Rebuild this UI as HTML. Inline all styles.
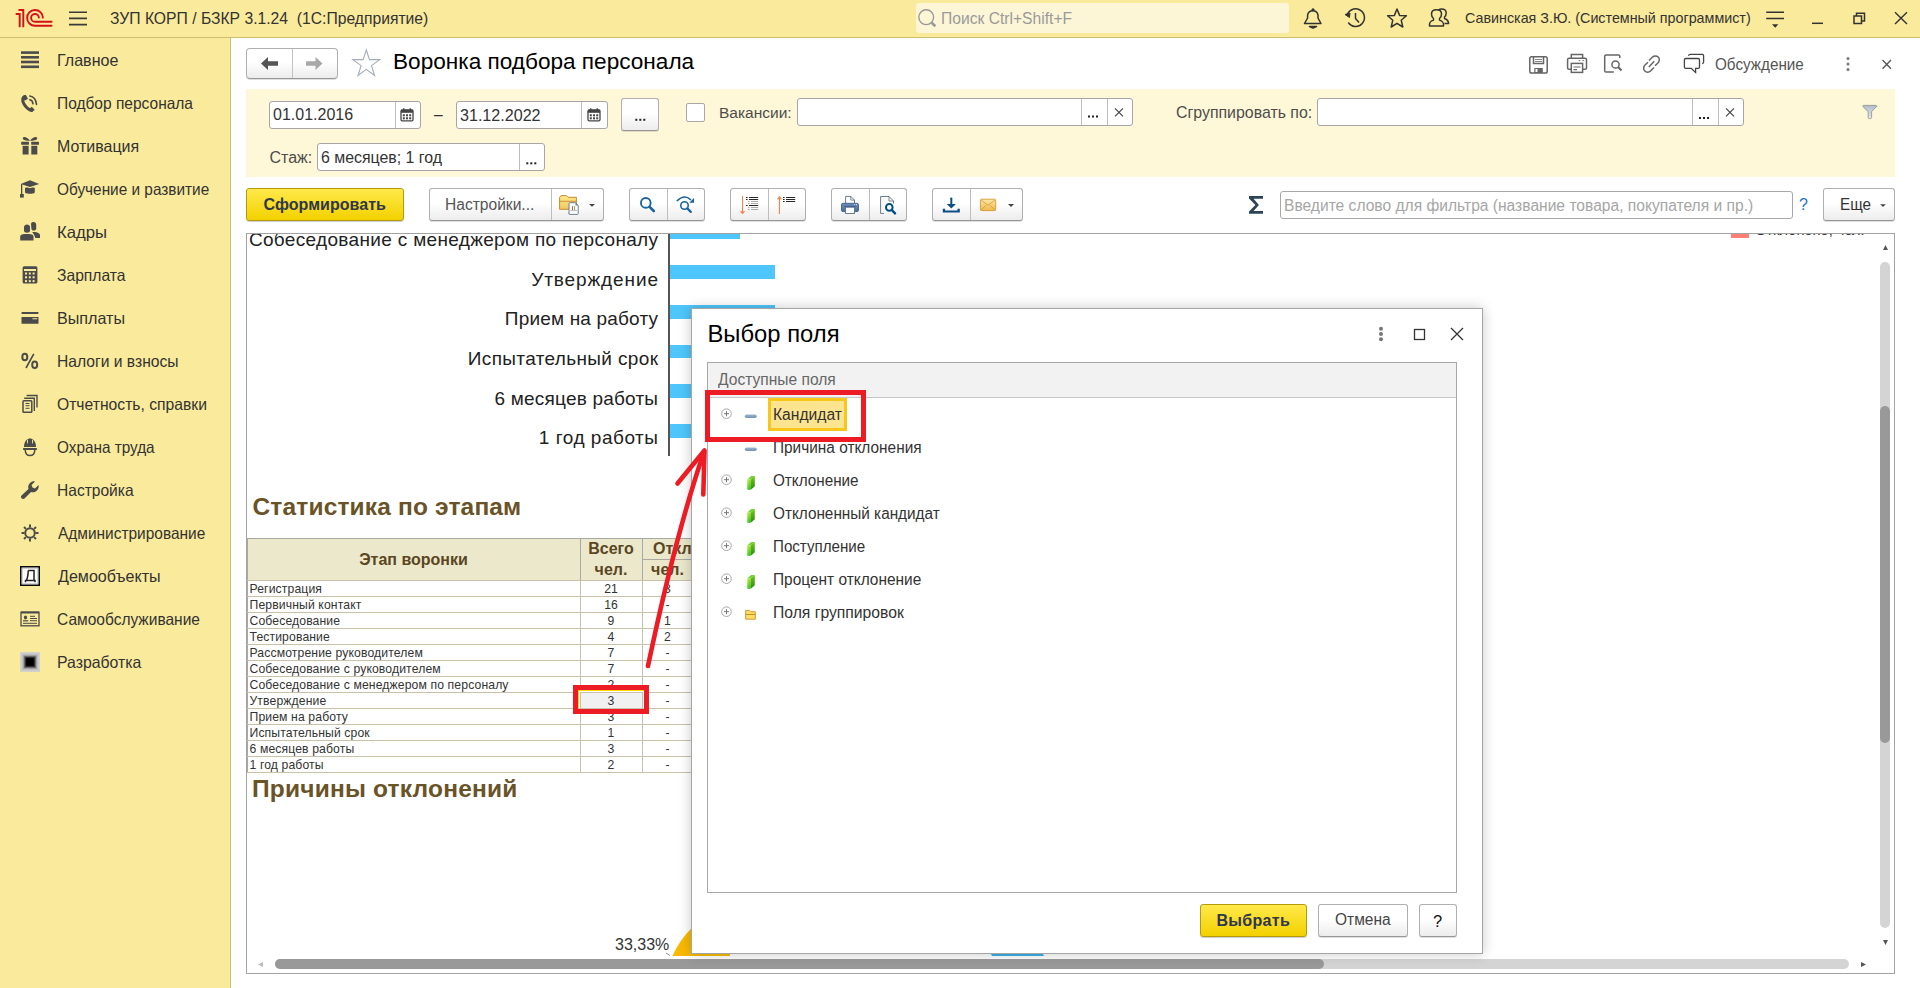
<!DOCTYPE html>
<html><head><meta charset="utf-8">
<style>
*{margin:0;padding:0;box-sizing:border-box}
html,body{width:1920px;height:988px;overflow:hidden;background:#fff;font-family:"Liberation Sans",sans-serif;color:#333}
.a{position:absolute}
.t{position:absolute;white-space:pre;line-height:1}
svg{position:absolute;overflow:visible}
#top{left:0;top:0;width:1920px;height:38px;background:#FAEA9B;border-bottom:1px solid #CDBE70}
#side{left:0;top:38px;width:231px;height:950px;background:#FAEA9B;border-right:1px solid #CDBE70}
.si{font-size:16.5px;color:#333;transform-origin:0 0}
.btn{position:absolute;border:1px solid #B0B0B0;border-bottom-color:#979797;border-radius:3px;background:linear-gradient(#FFFFFF 45%,#ECECEC);box-shadow:0 1px 0.5px rgba(0,0,0,.12)}
.inp{position:absolute;border:1px solid #A6A6A6;border-radius:3px;background:#fff}
.dv{position:absolute;top:0;bottom:0;width:1px;background:#BDBDBD}
.ybtn{position:absolute;border:1px solid #B39B0A;border-radius:3px;background:linear-gradient(#FFE94A,#F2D100);box-shadow:0 1px 1px rgba(0,0,0,.2)}
</style></head><body>

<!-- TOP BAR -->
<div id="top" class="a"></div>
<svg style="left:0;top:0" width="60" height="37" viewBox="0 0 60 37">
  <g fill="none" stroke="#D50F1A" stroke-width="1.9" stroke-linecap="round" stroke-linejoin="miter">
    <path d="M16.4 14 H19.7 V26.4"/>
    <path d="M19.2 10 H23.3 V26.4"/>
    <path d="M42.9 17.6 A7.9 7.9 0 1 0 35 25.8 H51.6"/>
    <path d="M38.9 17.6 A3.9 3.9 0 1 0 35 21.8 H51.6"/>
  </g>
</svg>
<svg style="left:0;top:0" width="100" height="37">
  <g stroke="#3a3a3a" stroke-width="1.6"><path d="M69 12.2H87M69 18.4H87M69 24.6H87"/></g>
</svg>
<div class="t" style="left:110px;top:11px;font-size:15.7px;color:#333">ЗУП КОРП / БЗКР 3.1.24  (1С:Предприятие)</div>

<div class="a" style="left:916px;top:3px;width:373px;height:30px;background:#FDF6D6;border-radius:3px"></div>
<svg style="left:0;top:0" width="1" height="1">
  <g fill="none" stroke="#999" stroke-width="1.4"><circle cx="926.2" cy="17.2" r="7.4"/><path d="M931.6 22.6 L935.3 26.3" stroke-width="2.7"/></g>
</svg>
<div class="t" style="left:941px;top:11px;font-size:16px;color:#9A9A9A;transform-origin:0 0;transform:scaleX(0.977)">Поиск Ctrl+Shift+F</div>

<!-- top right icons -->
<svg style="left:0;top:0" width="1" height="1">
  <g fill="none" stroke="#333" stroke-width="1.5" stroke-linejoin="round">
    <!-- bell -->
    <path d="M1304.5 23.5 H1321 L1318 18 V15 A5.3 5.3 0 0 0 1307.6 15 V18 Z"/>
    <path d="M1309.5 26.5 H1316.5 L1313 28 Z" fill="#333"/>
    <circle cx="1313" cy="9.8" r="0.8" fill="#333"/>
    <!-- history -->
    <path d="M1347 16 A8.8 8.8 0 1 1 1348.3 22.5"/>
    <path d="M1345 14.5 L1349.5 17.5 L1350 13 Z" fill="#333" stroke-width="1"/>
    <path d="M1355.5 13 V18.5 L1359 22.5"/>
    <!-- star -->
    <path d="M1397 9 L1399.6 15.4 L1406.4 15.8 L1401.2 20.2 L1402.8 27 L1397 23.3 L1391.2 27 L1392.8 20.2 L1387.6 15.8 L1394.4 15.4 Z"/>
    <!-- users -->
    <path d="M1429.5 26 H1443.5 C1444 22 1442 21 1439.5 20 V18.5 C1441 17.5 1441.5 15.5 1441.5 14 C1441.5 11.5 1439.5 9.8 1436.5 9.8 C1433.5 9.8 1431.5 11.5 1431.5 14 C1431.5 15.5 1432 17.5 1433.5 18.5 V20 C1431 21 1429 22 1429.5 26 Z"/>
    <path d="M1438.5 10 C1439.5 9.2 1440.5 9 1441.5 9 C1444.5 9 1446.2 10.8 1446.2 13 C1446.2 14.5 1445.8 16 1444.5 17 V18.5 C1447 19.5 1448.6 20.5 1448.6 23.5 H1444.5"/>
  </g>
</svg>
<div class="t" style="left:1465px;top:11px;font-size:14.3px;color:#333">Савинская З.Ю. (Системный программист)</div>
<svg style="left:0;top:0" width="1" height="1">
  <g fill="none" stroke="#333" stroke-width="1.5">
    <path d="M1766.2 12.2 H1784 M1766.2 18.5 H1784"/>
    <path d="M1772 24.2 H1778.4 L1775.2 27.8 Z" fill="#333" stroke="none"/>
    <path d="M1812 23.3 H1823"/>
    <path d="M1854 16 H1861.5 V23.5 H1854 Z M1856.5 16 V13.2 H1864.5 V21 H1861.5"/>
    <path d="M1895 12.2 L1907 24 M1907 12.2 L1895 24" stroke-width="1.4"/>
  </g>
</svg>

<!-- SIDEBAR -->
<div id="side" class="a"></div>
<div id="sideitems">
<svg style="left:15px;top:45px" width="30" height="30" viewBox="0 0 30 30"><g fill="#4B4B4B"><rect x="6" y="6.3" width="18" height="2.6"/><rect x="6" y="11" width="18" height="2.6"/><rect x="6" y="15.7" width="18" height="2.6"/><rect x="6" y="20.5" width="18" height="2.6"/></g></svg>
<div class="t si" style="left:56.6px;top:52px;transform:scaleX(0.974)">Главное</div>
<svg style="left:15px;top:88px" width="30" height="30" viewBox="0 0 30 30"><g fill="none" stroke="#4B4B4B" stroke-linecap="round"><path d="M9.5 8.5 C7.5 10 7 12.5 9 16 C11 19.5 13 21.5 16.5 22.5" stroke-width="3"/><path d="M8.5 9 L10.5 7.8 L12 10.5 L10 11.8Z" fill="#4B4B4B" stroke-width="1.5"/><path d="M15 21.2 L16.8 19.8 L18.6 21.8 L17 23Z" fill="#4B4B4B" stroke-width="1.5"/><path d="M14.8 8 C18.5 8.5 21 11.5 21.5 16.5" stroke-width="1.6"/><path d="M14.8 11.8 C16.8 12.3 17.8 13.8 18 15.8" stroke-width="1.6"/></g></svg>
<div class="t si" style="left:56.7px;top:95px;transform:scaleX(0.940)">Подбор персонала</div>
<svg style="left:15px;top:131px" width="30" height="30" viewBox="0 0 30 30"><g fill="#4B4B4B"><path d="M15 9.7 C12 9.7 7.5 9.5 7.8 7.2 C8.2 5 12 5.5 15 9.7Z M15 9.7 C18 9.7 22.5 9.5 22.2 7.2 C21.8 5 18 5.5 15 9.7Z"/><rect x="6.2" y="10.8" width="7.8" height="3" rx="0.5"/><rect x="16.2" y="10.8" width="7.8" height="3" rx="0.5"/><rect x="7.6" y="14.8" width="6" height="8.7"/><rect x="16.3" y="14.8" width="6" height="8.7"/></g></svg>
<div class="t si" style="left:56.6px;top:138px;transform:scaleX(0.967)">Мотивация</div>
<svg style="left:15px;top:174px" width="30" height="30" viewBox="0 0 30 30"><g fill="#4B4B4B"><path d="M5.8 10 L15 6.2 L24.2 10 L15 12.9Z"/><path d="M10 14 C12 13.2 13.5 13.8 15 14.3 C16.5 13.8 18 13.2 19.8 14 V18 C19.8 19.5 17 19.8 15 19.8 C13 19.8 10 19.5 10 18Z"/><rect x="6" y="10" width="1.3" height="10"/><rect x="5" y="20" width="3.8" height="3.6"/></g></svg>
<div class="t si" style="left:56.7px;top:181px;transform:scaleX(0.931)">Обучение и развитие</div>
<svg style="left:15px;top:217px" width="30" height="30" viewBox="0 0 30 30"><g fill="#4B4B4B"><path d="M16 7 C16 5.5 17.5 5 18.5 5 C20 5 21.2 6 21.2 7.5 V11.5 C21.2 13 20.2 13.6 18.8 13.6 C17 13.6 16.4 12.8 16.4 11.5Z"/><path d="M17.2 15 H20.5 C23 15.5 25 16.5 25 18 V21 H20.3 C20 19 18.5 17 17.2 15Z"/><path d="M9 10 C9 8.5 10.5 7.6 12 7.6 C13.6 7.6 15 8.5 15 10 V13.5 C15 15 13.8 15.7 12 15.7 C10.3 15.7 9 15 9 13.5Z"/><path d="M5.2 19.5 C5.2 18 7 17.2 9.8 17 H14 C16.8 17.2 18.5 18 18.5 19.5 V23.6 H5.2Z"/></g></svg>
<div class="t si" style="left:56.6px;top:224px;transform:scaleX(1.011)">Кадры</div>
<svg style="left:15px;top:260px" width="30" height="30" viewBox="0 0 30 30"><g><rect x="7.6" y="6.2" width="14.8" height="17.3" rx="1.5" fill="#4B4B4B"/><rect x="9" y="9" width="12" height="2" fill="#FAEA9B"/><rect x="10.0" y="12.5" width="2" height="2" fill="#FAEA9B"/><rect x="10.0" y="16.3" width="2" height="2" fill="#FAEA9B"/><rect x="10.0" y="20.1" width="2" height="2" fill="#FAEA9B"/><rect x="13.8" y="12.5" width="2" height="2" fill="#FAEA9B"/><rect x="13.8" y="16.3" width="2" height="2" fill="#FAEA9B"/><rect x="13.8" y="20.1" width="2" height="2" fill="#FAEA9B"/><rect x="17.6" y="12.5" width="2" height="2" fill="#FAEA9B"/><rect x="17.6" y="16.3" width="2" height="2" fill="#FAEA9B"/><rect x="17.6" y="20.1" width="2" height="2" fill="#FAEA9B"/></g></svg>
<div class="t si" style="left:56.7px;top:267px;transform:scaleX(0.948)">Зарплата</div>
<svg style="left:15px;top:303px" width="30" height="30" viewBox="0 0 30 30"><g fill="#4B4B4B"><rect x="6.5" y="9" width="17" height="1.9" rx="0.6"/><rect x="6.5" y="14" width="17" height="6.8" rx="0.6"/><rect x="17.3" y="15.2" width="5" height="1" rx="0.5" fill="#FAEA9B"/></g></svg>
<div class="t si" style="left:56.6px;top:310px;transform:scaleX(0.976)">Выплаты</div>
<svg style="left:15px;top:346px" width="30" height="30" viewBox="0 0 30 30"><g fill="none" stroke="#4B4B4B"><ellipse cx="9.8" cy="11" rx="2.5" ry="3.3" stroke-width="2"/><ellipse cx="19.7" cy="18.7" rx="2.5" ry="3.3" stroke-width="2"/><path d="M18.8 7.8 L11 22" stroke-width="1.6"/></g></svg>
<div class="t si" style="left:56.7px;top:353px;transform:scaleX(0.948)">Налоги и взносы</div>
<svg style="left:15px;top:389px" width="30" height="30" viewBox="0 0 30 30"><g fill="none" stroke="#4B4B4B"><rect x="8" y="11.7" width="8.8" height="11.6" rx="0.8" stroke-width="1.5"/><path d="M9.2 9.3 H19.3 V22" stroke-width="1.4"/><path d="M11.6 6.5 H22 V18.5" stroke-width="1.4"/><path d="M10.5 14.5 H14.5 M10.5 16.7 H14.5 M10.5 19.3 H14.5" stroke-width="1"/></g></svg>
<div class="t si" style="left:56.6px;top:396px;transform:scaleX(0.950)">Отчетность, справки</div>
<svg style="left:15px;top:432px" width="30" height="30" viewBox="0 0 30 30"><g fill="#4B4B4B"><path d="M9 15 C9 9.8 11.3 7 15 6.2 C18.7 7 21 9.8 21 15Z"/><rect x="12" y="7.8" width="0.9" height="3.6" fill="#FAEA9B"/><rect x="17.1" y="7.8" width="0.9" height="3.6" fill="#FAEA9B"/><rect x="8" y="16" width="14" height="1.9" rx="0.6"/><path d="M10.2 18 C10.4 21.6 12.5 23.6 15 23.6 C17.5 23.6 19.6 21.6 19.8 18" fill="none" stroke="#4B4B4B" stroke-width="1.5"/></g></svg>
<div class="t si" style="left:56.7px;top:439px;transform:scaleX(0.928)">Охрана труда</div>
<svg style="left:15px;top:475px" width="30" height="30" viewBox="0 0 30 30"><g fill="#4B4B4B"><path d="M6.5 20.5 L13.5 14 C13 12 13 10 15 8 C16.5 6.5 18.5 6 20 6.5 L16.5 10 L17.5 12.5 L20 13.5 L23.5 10 C24 11.5 23.5 14 22 15.5 C20 17.5 18 17.5 16 17 L9.5 23.5 C8.5 24.2 7.3 24 6.5 23.2 C5.8 22.4 5.8 21.3 6.5 20.5Z"/></g></svg>
<div class="t si" style="left:56.7px;top:482px;transform:scaleX(0.943)">Настройка</div>
<svg style="left:15px;top:518px" width="30" height="30" viewBox="0 0 30 30"><g fill="none" stroke="#4B4B4B"><circle cx="15" cy="15" r="4.8" stroke-width="2"/><g stroke-width="2"><path d="M15 6.5 V9.5 M15 20.5 V23.5 M6.5 15 H9.5 M20.5 15 H23.5 M9 9 L10.9 10.9 M19.1 19.1 L21 21 M21 9 L19.1 10.9 M10.9 19.1 L9 21"/></g></g></svg>
<div class="t si" style="left:57.6px;top:525px;transform:scaleX(0.936)">Администрирование</div>
<svg style="left:15px;top:561px" width="30" height="30" viewBox="0 0 30 30"><g><rect x="5.8" y="5.8" width="18.4" height="18.4" fill="#fff" stroke="#0a0a0a" stroke-width="1.6"/><rect x="7.3" y="7.3" width="15.4" height="15.4" fill="none" stroke="#c8c8c8" stroke-width="1"/><path d="M13.2 9.6 H19 V19.5 M13.2 9.6 C13.2 14 12.7 17 11.3 19.5 M10.5 21.2 V19.5 H20 V21.2" fill="none" stroke="#222" stroke-width="1.5"/></g></svg>
<div class="t si" style="left:57.6px;top:568px;transform:scaleX(0.975)">Демообъекты</div>
<svg style="left:15px;top:604px" width="30" height="30" viewBox="0 0 30 30"><g fill="none" stroke="#4B4B4B"><rect x="6" y="8.2" width="18" height="13.6" stroke-width="1.3"/><path d="M6 8.5 H24" stroke-width="2"/></g><g fill="#4B4B4B"><ellipse cx="10.5" cy="13.4" rx="1.6" ry="2"/><rect x="8" y="16.2" width="5.3" height="1.2"/><rect x="15" y="11.8" width="5" height="1"/><rect x="15" y="14" width="7" height="1"/><rect x="15" y="16.2" width="7" height="1"/><rect x="8" y="18.8" width="14" height="1"/></g></svg>
<div class="t si" style="left:56.7px;top:611px;transform:scaleX(0.940)">Самообслуживание</div>
<svg style="left:15px;top:647px" width="30" height="30" viewBox="0 0 30 30"><g><rect x="5.2" y="5.2" width="19.6" height="19.6" fill="#CBCCD2"/><rect x="7" y="7" width="16" height="16" fill="#BEBEC0"/><rect x="8.2" y="8.2" width="13.6" height="13.6" fill="#9A9A9A"/><rect x="9.2" y="9.2" width="11.6" height="11.6" fill="#5E5E5E"/><rect x="10.2" y="10.2" width="9.6" height="9.6" fill="#262626"/><rect x="11.2" y="11.2" width="7.6" height="7.6" fill="#000"/></g></svg>
<div class="t si" style="left:56.6px;top:654px;transform:scaleX(0.960)">Разработка</div>
</div>

<!-- CONTENT HEADER -->
<div class="btn" style="left:246px;top:48px;width:92px;height:31px;border-radius:4px"></div>
<div class="a" style="left:292px;top:49px;width:1px;height:29px;background:#C4C4C4"></div>
<svg style="left:0;top:0" width="1" height="1">
  <path d="M261 63.5 L268 57 V61.3 H278 V65.7 H268 V70Z" fill="#555"/>
  <path d="M322.5 63.5 L315.5 57 V61.3 H306 V65.7 H315.5 V70Z" fill="#A8A8A8"/>
  <path d="M366.3 50 L369.5 59.6 L379.8 59.6 L371.5 65.6 L374.6 75.5 L366.3 69.4 L358 75.5 L361.1 65.6 L352.8 59.6 L363.1 59.6Z" fill="none" stroke="#A3AEB8" stroke-width="1.1" stroke-linejoin="miter"/>
</svg>
<div class="t" style="left:393px;top:50.8px;font-size:22.6px;color:#000">Воронка подбора персонала</div>

<svg style="left:0;top:0" width="1" height="1">
 <g fill="none" stroke="#666" stroke-width="1.5">
  <!-- save -->
  <rect x="1529.8" y="56.8" width="17.4" height="16.2" rx="1.8"/>
  <path d="M1533.5 57 V63.5 H1543.5 V57"/>
  <path d="M1535 59.5 H1542 M1535 61.5 H1542" stroke-width="0.8"/>
  <rect x="1534.3" y="68" width="8.5" height="5" fill="#666" stroke="none"/>
  <rect x="1535.5" y="69" width="2" height="3" fill="#fff" stroke="none"/>
  <!-- print -->
  <path d="M1571.3 58.3 V54.4 H1582.6 V58.3"/>
  <path d="M1571.3 69.3 H1569 Q1567.6 69.3 1567.6 67.9 V59.7 Q1567.6 58.3 1569 58.3 H1585.1 Q1586.5 58.3 1586.5 59.7 V67.9 Q1586.5 69.3 1585.1 69.3 H1582.6"/>
  <rect x="1571.3" y="63.4" width="11.3" height="9"/>
  <path d="M1573.5 67 H1580.5 M1573.5 69.6 H1577" stroke-width="1.1"/>
  <path d="M1578.7 60.6 H1580.3 M1582.5 60.6 H1584.1" stroke-width="0.9"/>
  <!-- preview -->
  <path d="M1613.8 72 H1606 C1605.2 72 1604.7 71.5 1604.7 70.7 V56.2 C1604.7 55.4 1605.2 55 1606 55 H1618.5 C1619.3 55 1619.8 55.4 1619.8 56.2 V58"/>
  <circle cx="1615.5" cy="64.5" r="3.6"/>
  <path d="M1618.3 67.3 L1621.5 70.5" stroke-width="2.2"/>
  <!-- link -->
  <path d="M1649 60.5 L1652.5 57 C1654 55.5 1656.7 55.5 1658.2 57 C1659.7 58.5 1659.7 61.2 1658.2 62.7 L1655 65.8"/>
  <path d="M1654 67.5 L1650.5 71 C1649 72.5 1646.3 72.5 1644.8 71 C1643.3 69.5 1643.3 66.8 1644.8 65.3 L1648 62.2"/>
  <path d="M1648.8 67 L1654.3 61.3"/>
  <!-- discussion -->
  <path d="M1688.4 55.7 Q1689 54.4 1690.3 54.4 H1702.3 Q1703.6 54.4 1703.6 55.7 V62 Q1703.6 63.3 1702.2 63.6" stroke="#444" stroke-width="1.3"/>
  <path d="M1685.7 58.5 H1698.2 Q1699.5 58.5 1699.5 59.8 V67 Q1699.5 68.3 1698.2 68.3 H1695.6 V72.5 L1691.2 68.3 H1685.7 Q1684.4 68.3 1684.4 67 V59.8 Q1684.4 58.5 1685.7 58.5Z" stroke="#444" stroke-width="1.3"/>
 </g>
 <g fill="#777"><circle cx="1848" cy="58.5" r="1.5"/><circle cx="1848" cy="64" r="1.5"/><circle cx="1848" cy="69.5" r="1.5"/></g>
 <path d="M1882.5 60 L1891 68.7 M1891 60 L1882.5 68.7" stroke="#555" stroke-width="1.3"/>
</svg>
<div class="t" style="left:1714.8px;top:56.8px;font-size:16px;color:#555;transform-origin:0 0;transform:scaleX(0.953)">Обсуждение</div>

<!-- FILTER PANEL -->
<div class="a" style="left:246px;top:89px;width:1649px;height:88px;background:#FEF8D8"></div>
<!-- date 1 -->
<div class="inp" style="left:269px;top:101px;width:152px;height:28px"><div class="dv" style="left:124.5px"></div></div>
<div class="t" style="left:273px;top:107.3px;font-size:16px;color:#333">01.01.2016</div>
<div class="t" style="left:434px;top:107px;font-size:15.6px;color:#333">–</div>
<div class="inp" style="left:456px;top:101px;width:152px;height:28px"><div class="dv" style="left:124px"></div></div>
<div class="t" style="left:460px;top:107.3px;font-size:16.1px;color:#333">31.12.2022</div>
<svg style="left:0;top:0" width="1" height="1">
 <g id="cal" transform="translate(0.5,1.3)"><rect x="400.5" y="108.5" width="12" height="11" rx="1.2" fill="none" stroke="#444" stroke-width="1.3"/><rect x="400.5" y="108.5" width="12" height="3" fill="#444"/><rect x="402.5" y="107" width="1.5" height="2.5" fill="#444"/><rect x="409" y="107" width="1.5" height="2.5" fill="#444"/>
 <g fill="#444"><rect x="402.3" y="113" width="2" height="2"/><rect x="405.5" y="113" width="2" height="2"/><rect x="408.7" y="113" width="2" height="2"/><rect x="402.3" y="116" width="2" height="2"/><rect x="405.5" y="116" width="2" height="2"/><rect x="408.7" y="116" width="2" height="2"/></g></g>
 <use href="#cal" x="187" y="0"/>
</svg>
<div class="btn" style="left:621px;top:98px;width:38px;height:33px"></div>
<svg style="left:0;top:0" width="1" height="1"><rect x="635.3" y="118.8" width="2" height="2" fill="#222"/><rect x="639.3" y="118.8" width="2" height="2" fill="#222"/><rect x="643.3" y="118.8" width="2" height="2" fill="#222"/></svg>
<div class="a" style="left:686px;top:103px;width:19px;height:19px;border:1px solid #A8A8A8;border-radius:2px;background:#fff"></div>
<div class="t" style="left:719px;top:104.5px;font-size:15.5px;color:#4D4D4D">Вакансии:</div>
<div class="inp" style="left:797px;top:98px;width:336px;height:28px"><div class="dv" style="left:283px"></div><div class="dv" style="left:309px"></div></div>
<svg style="left:0;top:0" width="1" height="1"><rect x="1088.0" y="115.5" width="2" height="2" fill="#222"/><rect x="1092.0" y="115.5" width="2" height="2" fill="#222"/><rect x="1096.0" y="115.5" width="2" height="2" fill="#222"/></svg>
<svg style="left:0;top:0" width="1" height="1"><path d="M1115 108.3 L1123 116.3 M1123 108.3 L1115 116.3" stroke="#444" stroke-width="1.2"/></svg>
<div class="t" style="left:1176px;top:105px;font-size:15.9px;color:#4D4D4D">Сгруппировать по:</div>
<div class="inp" style="left:1317px;top:98px;width:427px;height:28px"><div class="dv" style="left:374px"></div><div class="dv" style="left:400px"></div></div>
<svg style="left:0;top:0" width="1" height="1"><rect x="1699.0" y="117.0" width="2" height="2" fill="#222"/><rect x="1703.0" y="117.0" width="2" height="2" fill="#222"/><rect x="1707.0" y="117.0" width="2" height="2" fill="#222"/></svg>
<svg style="left:0;top:0" width="1" height="1"><path d="M1726 108.3 L1734 116.3 M1734 108.3 L1726 116.3" stroke="#444" stroke-width="1.2"/>
 <defs><linearGradient id="fung" x1="0" y1="0" x2="0" y2="1"><stop offset="0" stop-color="#B4BCC8"/><stop offset="1" stop-color="#E6EAEE"/></linearGradient></defs><path d="M1862.6 106.2 L1863.3 105.4 H1876.2 L1876.9 106.2 L1871.6 111.7 V117.5 Q1871.6 118.6 1870.5 118.6 H1869.3 Q1868.2 118.6 1868.2 117.5 V111.7Z" fill="url(#fung)" stroke="#8E9898" stroke-width="0.9" stroke-linejoin="round"/>
</svg>
<!-- row 2 -->
<div class="t" style="left:269.5px;top:150px;font-size:16px;color:#4D4D4D">Стаж:</div>
<div class="inp" style="left:317px;top:143px;width:228px;height:28px"><div class="dv" style="left:201px"></div></div>
<div class="t" style="left:321px;top:149.5px;font-size:15.9px;color:#333">6 месяцев; 1 год</div>
<svg style="left:0;top:0" width="1" height="1"><rect x="526.3" y="162.3" width="2" height="2" fill="#222"/><rect x="530.3" y="162.3" width="2" height="2" fill="#222"/><rect x="534.3" y="162.3" width="2" height="2" fill="#222"/></svg>

<!-- TOOLBAR -->
<div class="ybtn" style="left:246px;top:188px;width:158px;height:33px"></div>
<div class="t" style="left:263.5px;top:197px;font-size:16px;font-weight:bold;color:#30374A;letter-spacing:0.05px">Сформировать</div>
<div class="btn" style="left:429px;top:188px;width:175px;height:33px"><div class="dv" style="left:121px"></div></div>
<div class="t" style="left:445.4px;top:196.7px;font-size:16px;color:#555;transform-origin:0 0;transform:scaleX(0.973)">Настройки...</div>
<svg style="left:0;top:0" width="1" height="1">
 <defs><linearGradient id="fold" x1="0" y1="0" x2="0" y2="1"><stop offset="0" stop-color="#FBE3A0"/><stop offset="1" stop-color="#F0C060"/></linearGradient></defs>
 <defs><linearGradient id="fold2" x1="0" y1="0" x2="0" y2="1"><stop offset="0" stop-color="#FFE98A"/><stop offset="1" stop-color="#F0C860"/></linearGradient></defs>
 <path d="M559.6 209.3 V197.5 L561 195.6 H566.3 L568 197.3 H576.4 V209.3Z" fill="url(#fold2)" stroke="#C98A30" stroke-width="1" stroke-linejoin="round"/>
 <path d="M559.6 201.3 H576.4" stroke="#C98A30" stroke-width="0.9"/>
 <path d="M569 214 V203.7 Q569 202.7 570 202.7 H575.5 L578.2 205.4 V213.6 Q578.2 214.4 577.4 214.4 H569.8 Q569 214.4 569 213.6Z" fill="#fff" stroke="#6E8090" stroke-width="1"/>
 <path d="M575.5 202.7 V205.4 H578.2Z" fill="#6E8090"/>
 <path d="M572.5 210 V206.2" stroke="#E03A2A" stroke-width="0.9"/><path d="M574.6 210 V206.2" stroke="#4CAF3A" stroke-width="0.9"/><path d="M570.4 210.6 H577" stroke="#8A8A8A" stroke-width="0.6"/>
 <path d="M589 204 H595 L592 206.8Z" fill="#444"/>
</svg>
<div class="btn" style="left:629px;top:188px;width:76px;height:33px"><div class="dv" style="left:37px"></div></div>
<div class="btn" style="left:730px;top:188px;width:76px;height:33px"><div class="dv" style="left:37px"></div></div>
<div class="btn" style="left:831px;top:188px;width:76px;height:33px"><div class="dv" style="left:37px"></div></div>
<div class="btn" style="left:932px;top:188px;width:91px;height:33px"><div class="dv" style="left:37px"></div></div>
<svg style="left:0;top:0" width="1" height="1">
 <defs><linearGradient id="mailg" x1="0" y1="0" x2="0" y2="1"><stop offset="0" stop-color="#FCE7A8"/><stop offset="1" stop-color="#EFBA4E"/></linearGradient>
 <linearGradient id="prg" x1="0" y1="0" x2="0" y2="1"><stop offset="0" stop-color="#6A8DBA"/><stop offset="1" stop-color="#4A6E9E"/></linearGradient></defs>
 <g fill="none" stroke="#1A64A0">
  <circle cx="645.8" cy="202.9" r="4.85" stroke-width="1.9"/><path d="M649.6 206.8 L653.8 211" stroke-width="2.6" stroke-linecap="round"/>
  <path d="M677.2 200.6 Q684.5 194 690.5 199.6" stroke-width="1.5" stroke-linecap="round"/>
  <path d="M694 198 L694 202.8 L689.3 202.7Z" fill="#1A64A0" stroke="none"/>
  <circle cx="684.5" cy="205.5" r="3.75" stroke-width="1.6"/><path d="M687.3 208.4 L690.8 211.9" stroke-width="2.2" stroke-linecap="round"/>
 </g>
 <g fill="#F0844A" stroke="none"><rect x="742" y="196" width="1.1" height="16"/><path d="M739.8 211.2 H745.3 L742.55 214.2Z"/>
  <rect x="778.9" y="198.5" width="1.1" height="15.5"/><path d="M776.8 199.2 H782.1 L779.45 196Z"/></g>
 <g fill="#111"><rect x="746" y="197" width="1.6" height="0.9"/><rect x="749" y="197" width="9.2" height="0.9"/><rect x="746" y="199" width="1.6" height="0.9"/><rect x="749" y="199" width="9.2" height="0.9"/><rect x="746" y="205" width="1.6" height="0.9"/><rect x="749" y="205" width="9.2" height="0.9"/>
  <rect x="783" y="197" width="1.6" height="0.9"/><rect x="786" y="197" width="9.2" height="0.9"/><rect x="783" y="199" width="1.6" height="0.9"/><rect x="786" y="199" width="9.2" height="0.9"/><rect x="783" y="201.1" width="1.6" height="0.9"/><rect x="786" y="201.1" width="9.2" height="0.9"/></g>
 <g fill="#999"><rect x="748" y="201.1" width="1.5" height="0.8"/><rect x="751" y="201.1" width="7.2" height="0.8"/><rect x="748" y="203.1" width="1.5" height="0.8"/><rect x="751" y="203.1" width="7.2" height="0.8"/><rect x="748" y="207.1" width="1.5" height="0.8"/><rect x="751" y="207.1" width="7.2" height="0.8"/><rect x="748" y="209.1" width="1.5" height="0.8"/><rect x="751" y="209.1" width="7.2" height="0.8"/></g>
 <!-- printer -->
 <path d="M845.6 203.5 V196.4 H850.8 L854.5 200.1 V203.5" fill="#fff" stroke="#5A6E85" stroke-width="0.9"/>
 <path d="M850.8 196.4 V200.1 H854.5" fill="none" stroke="#5A6E85" stroke-width="0.8"/>
 <rect x="841.5" y="203.3" width="17" height="8.3" rx="1.5" fill="url(#prg)" stroke="#3F5F88" stroke-width="0.9"/>
 <rect x="844.5" y="205.8" width="11" height="1" fill="#3F5F88"/>
 <circle cx="854.6" cy="204.6" r="0.5" fill="#fff"/><circle cx="856.5" cy="204.6" r="0.5" fill="#fff"/>
 <rect x="845.6" y="207.2" width="8.9" height="6.3" fill="#fff" stroke="#5A6E85" stroke-width="0.9"/>
 <!-- preview -->
 <path d="M884 213.4 H880.6 V196.5 H889 L893.5 201 V203.5" fill="#fafafa" stroke="#5A6E85" stroke-width="0.9"/>
 <path d="M889 196.5 V201 H893.5" fill="none" stroke="#5A6E85" stroke-width="0.8"/>
 <circle cx="889.3" cy="207.4" r="3.3" fill="#fff" stroke="#004F80" stroke-width="2"/><path d="M891.8 210 L895 213.3" stroke="#004F80" stroke-width="2.5" stroke-linecap="round"/>
 <!-- download -->
 <g fill="#0D4F85"><rect x="950.3" y="197.5" width="2" height="7.5" rx="0.8"/><path d="M946.7 203.9 H955.9 L951.3 208.6Z"/><path d="M942.8 208.8 H945.1 V210.4 H957.5 V208.8 H959.8 V212.6 H942.8Z"/></g>
 <!-- mail -->
 <rect x="980.4" y="199.2" width="15.3" height="11.4" rx="1.2" fill="url(#mailg)" stroke="#D39B30" stroke-width="0.9"/>
 <path d="M981 200 L988 205.3 L995.2 200 M981 210 L986 205.5 M995.2 210 L990.2 205.5" fill="none" stroke="#D39B30" stroke-width="0.8"/>
 <path d="M1008 204 H1014 L1011 207Z" fill="#444"/>
</svg>
<svg style="left:0;top:0" width="1" height="1"><path d="M1249 196 H1263 V198.7 H1253.6 L1258.9 204.9 L1253.6 211.1 H1263 V213.8 H1249 V211.4 L1255.4 204.9 L1249 198.4Z" fill="#2C4458"/></svg>
<div class="inp" style="left:1280px;top:191px;width:513px;height:28px;border-color:#A8A8A8"></div>
<div class="t" style="left:1284px;top:198px;font-size:15.6px;color:#A6A6A6">Введите слово для фильтра (название товара, покупателя и пр.)</div>
<div class="t" style="left:1799px;top:197px;font-size:16px;color:#1E73BE">?</div>
<div class="btn" style="left:1823px;top:188px;width:72px;height:33px"></div>
<div class="t" style="left:1839.8px;top:196.9px;font-size:16px;color:#333;transform-origin:0 0;transform:scaleX(0.95)">Еще</div>
<svg style="left:0;top:0" width="1" height="1"><path d="M1880.2 204.2 H1885.8 L1883 207Z" fill="#444"/></svg>

<!-- REPORT -->
<div class="a" style="left:246px;top:233px;width:1649px;height:741px;border:1px solid #A3A3A3;background:#fff;overflow:hidden">
<div class="a" style="left:1484px;top:-8px;width:18px;height:12px;background:#FF7F74"></div>
<div class="t" style="left:1508px;top:-11px;font-size:14.6px;color:#333">Отклонено, чел.</div>
<div class="t" style="right:1235.67px;top:-4.1px;font-size:19px;color:#222;letter-spacing:0.33px;text-align:right">Собеседование с менеджером по персоналу</div>
<div class="t" style="right:1235.10px;top:35.9px;font-size:19px;color:#222;letter-spacing:0.9px;text-align:right">Утверждение</div>
<div class="t" style="right:1235.82px;top:75.4px;font-size:19px;color:#222;letter-spacing:0.18px;text-align:right">Прием на работу</div>
<div class="t" style="right:1235.64px;top:115.4px;font-size:19px;color:#222;letter-spacing:0.36px;text-align:right">Испытательный срок</div>
<div class="t" style="right:1235.80px;top:154.9px;font-size:19px;color:#222;letter-spacing:0.2px;text-align:right">6 месяцев работы</div>
<div class="t" style="right:1235.47px;top:194.4px;font-size:19px;color:#222;letter-spacing:0.53px;text-align:right">1 год работы</div>
<div class="a" style="left:423px;top:-9.0px;width:69.6px;height:13.5px;background:#4FC6FB"></div>
<div class="a" style="left:423px;top:31.0px;width:105.0px;height:13.5px;background:#4FC6FB"></div>
<div class="a" style="left:423px;top:71.0px;width:105.0px;height:13.5px;background:#4FC6FB"></div>
<div class="a" style="left:423px;top:110.5px;width:70.0px;height:13.5px;background:#4FC6FB"></div>
<div class="a" style="left:423px;top:150.0px;width:70.0px;height:13.5px;background:#4FC6FB"></div>
<div class="a" style="left:423px;top:190.0px;width:70.0px;height:13.5px;background:#4FC6FB"></div>
<div class="a" style="left:421px;top:0px;width:2px;height:222px;background:#555"></div>
<div class="t" style="left:5.5px;top:260.5px;font-size:24.5px;font-weight:bold;color:#6A5327;letter-spacing:0.16px">Статистика по этапам</div>
<div class="a" style="left:0px;top:304px;width:446px;height:42px;background:#EBE8CB;border-top:1px solid #A8A8A8"></div>
<div class="a" style="left:0px;top:304px;width:1px;height:235px;background:#A8A8A8"></div>
<div class="a" style="left:333px;top:304px;width:1px;height:42px;background:#A8A8A8"></div>
<div class="a" style="left:395px;top:304px;width:1px;height:42px;background:#A8A8A8"></div>
<div class="a" style="left:395px;top:325px;width:60px;height:1px;background:#A8A8A8"></div>
<div class="a" style="left:0px;top:346px;width:446px;height:1px;background:#C9C1A9"></div>
<div class="t" style="left:0px;width:333px;text-align:center;top:317.5px;font-size:16px;font-weight:bold;color:#5B4623">Этап воронки</div>
<div class="t" style="left:333px;width:62px;text-align:center;top:307.0px;font-size:16px;font-weight:bold;color:#5B4623">Всего</div>
<div class="t" style="left:333px;width:62px;text-align:center;top:327.5px;font-size:16px;font-weight:bold;color:#5B4623">чел.</div>
<div class="t" style="left:406px;top:307.0px;font-size:16px;font-weight:bold;color:#5B4623">Отклонено</div>
<div class="t" style="left:395px;width:51px;text-align:center;top:327.5px;font-size:16px;font-weight:bold;color:#5B4623">чел.</div>
<div class="a" style="left:0px;top:362px;width:446px;height:1px;background:#C9C1A9"></div>
<div class="a" style="left:333px;top:346px;width:1px;height:16px;background:#C9C1A9"></div>
<div class="a" style="left:395px;top:346px;width:1px;height:16px;background:#C9C1A9"></div>
<div class="t" style="left:2.5px;top:348.7px;font-size:12.2px;color:#333;letter-spacing:0.12px">Регистрация</div>
<div class="t" style="left:333px;width:62px;text-align:center;top:348.7px;font-size:12.2px;color:#333">21</div>
<div class="t" style="left:395px;width:51px;text-align:center;top:348.7px;font-size:12.2px;color:#333">3</div>
<div class="a" style="left:0px;top:378px;width:446px;height:1px;background:#C9C1A9"></div>
<div class="a" style="left:333px;top:362px;width:1px;height:16px;background:#C9C1A9"></div>
<div class="a" style="left:395px;top:362px;width:1px;height:16px;background:#C9C1A9"></div>
<div class="t" style="left:2.5px;top:364.7px;font-size:12.2px;color:#333;letter-spacing:0.12px">Первичный контакт</div>
<div class="t" style="left:333px;width:62px;text-align:center;top:364.7px;font-size:12.2px;color:#333">16</div>
<div class="t" style="left:395px;width:51px;text-align:center;top:364.7px;font-size:12.2px;color:#333">-</div>
<div class="a" style="left:0px;top:394px;width:446px;height:1px;background:#C9C1A9"></div>
<div class="a" style="left:333px;top:378px;width:1px;height:16px;background:#C9C1A9"></div>
<div class="a" style="left:395px;top:378px;width:1px;height:16px;background:#C9C1A9"></div>
<div class="t" style="left:2.5px;top:380.7px;font-size:12.2px;color:#333;letter-spacing:0.12px">Собеседование</div>
<div class="t" style="left:333px;width:62px;text-align:center;top:380.7px;font-size:12.2px;color:#333">9</div>
<div class="t" style="left:395px;width:51px;text-align:center;top:380.7px;font-size:12.2px;color:#333">1</div>
<div class="a" style="left:0px;top:410px;width:446px;height:1px;background:#C9C1A9"></div>
<div class="a" style="left:333px;top:394px;width:1px;height:16px;background:#C9C1A9"></div>
<div class="a" style="left:395px;top:394px;width:1px;height:16px;background:#C9C1A9"></div>
<div class="t" style="left:2.5px;top:396.7px;font-size:12.2px;color:#333;letter-spacing:0.12px">Тестирование</div>
<div class="t" style="left:333px;width:62px;text-align:center;top:396.7px;font-size:12.2px;color:#333">4</div>
<div class="t" style="left:395px;width:51px;text-align:center;top:396.7px;font-size:12.2px;color:#333">2</div>
<div class="a" style="left:0px;top:426px;width:446px;height:1px;background:#C9C1A9"></div>
<div class="a" style="left:333px;top:410px;width:1px;height:16px;background:#C9C1A9"></div>
<div class="a" style="left:395px;top:410px;width:1px;height:16px;background:#C9C1A9"></div>
<div class="t" style="left:2.5px;top:412.7px;font-size:12.2px;color:#333;letter-spacing:0.12px">Рассмотрение руководителем</div>
<div class="t" style="left:333px;width:62px;text-align:center;top:412.7px;font-size:12.2px;color:#333">7</div>
<div class="t" style="left:395px;width:51px;text-align:center;top:412.7px;font-size:12.2px;color:#333">-</div>
<div class="a" style="left:0px;top:442px;width:446px;height:1px;background:#C9C1A9"></div>
<div class="a" style="left:333px;top:426px;width:1px;height:16px;background:#C9C1A9"></div>
<div class="a" style="left:395px;top:426px;width:1px;height:16px;background:#C9C1A9"></div>
<div class="t" style="left:2.5px;top:428.7px;font-size:12.2px;color:#333;letter-spacing:0.12px">Собеседование с руководителем</div>
<div class="t" style="left:333px;width:62px;text-align:center;top:428.7px;font-size:12.2px;color:#333">7</div>
<div class="t" style="left:395px;width:51px;text-align:center;top:428.7px;font-size:12.2px;color:#333">-</div>
<div class="a" style="left:0px;top:458px;width:446px;height:1px;background:#C9C1A9"></div>
<div class="a" style="left:333px;top:442px;width:1px;height:16px;background:#C9C1A9"></div>
<div class="a" style="left:395px;top:442px;width:1px;height:16px;background:#C9C1A9"></div>
<div class="t" style="left:2.5px;top:444.7px;font-size:12.2px;color:#333;letter-spacing:0.12px">Собеседование с менеджером по персоналу</div>
<div class="t" style="left:333px;width:62px;text-align:center;top:444.7px;font-size:12.2px;color:#333">2</div>
<div class="t" style="left:395px;width:51px;text-align:center;top:444.7px;font-size:12.2px;color:#333">-</div>
<div class="a" style="left:331px;top:456px;width:67px;height:20px;background:#fff;border-top:1px solid #FFDA00;border-left:1px solid #FFDA00"></div><div class="a" style="left:334px;top:459px;width:61px;height:16px;background:#F1F1F1"></div><div class="a" style="left:333px;top:458px;width:63px;height:1px;background:#C9C1A9"></div>
<div class="a" style="left:0px;top:474px;width:446px;height:1px;background:#C9C1A9"></div>
<div class="a" style="left:333px;top:458px;width:1px;height:16px;background:#C9C1A9"></div>
<div class="a" style="left:395px;top:458px;width:1px;height:16px;background:#C9C1A9"></div>
<div class="t" style="left:2.5px;top:460.7px;font-size:12.2px;color:#333;letter-spacing:0.12px">Утверждение</div>
<div class="t" style="left:333px;width:62px;text-align:center;top:460.7px;font-size:12.2px;color:#333">3</div>
<div class="t" style="left:395px;width:51px;text-align:center;top:460.7px;font-size:12.2px;color:#333">-</div>
<div class="a" style="left:0px;top:490px;width:446px;height:1px;background:#C9C1A9"></div>
<div class="a" style="left:333px;top:474px;width:1px;height:16px;background:#C9C1A9"></div>
<div class="a" style="left:395px;top:474px;width:1px;height:16px;background:#C9C1A9"></div>
<div class="t" style="left:2.5px;top:476.7px;font-size:12.2px;color:#333;letter-spacing:0.12px">Прием на работу</div>
<div class="t" style="left:333px;width:62px;text-align:center;top:476.7px;font-size:12.2px;color:#333">3</div>
<div class="t" style="left:395px;width:51px;text-align:center;top:476.7px;font-size:12.2px;color:#333">-</div>
<div class="a" style="left:0px;top:506px;width:446px;height:1px;background:#C9C1A9"></div>
<div class="a" style="left:333px;top:490px;width:1px;height:16px;background:#C9C1A9"></div>
<div class="a" style="left:395px;top:490px;width:1px;height:16px;background:#C9C1A9"></div>
<div class="t" style="left:2.5px;top:492.7px;font-size:12.2px;color:#333;letter-spacing:0.12px">Испытательный срок</div>
<div class="t" style="left:333px;width:62px;text-align:center;top:492.7px;font-size:12.2px;color:#333">1</div>
<div class="t" style="left:395px;width:51px;text-align:center;top:492.7px;font-size:12.2px;color:#333">-</div>
<div class="a" style="left:0px;top:522px;width:446px;height:1px;background:#C9C1A9"></div>
<div class="a" style="left:333px;top:506px;width:1px;height:16px;background:#C9C1A9"></div>
<div class="a" style="left:395px;top:506px;width:1px;height:16px;background:#C9C1A9"></div>
<div class="t" style="left:2.5px;top:508.7px;font-size:12.2px;color:#333;letter-spacing:0.12px">6 месяцев работы</div>
<div class="t" style="left:333px;width:62px;text-align:center;top:508.7px;font-size:12.2px;color:#333">3</div>
<div class="t" style="left:395px;width:51px;text-align:center;top:508.7px;font-size:12.2px;color:#333">-</div>
<div class="a" style="left:0px;top:538px;width:446px;height:1px;background:#C9C1A9"></div>
<div class="a" style="left:333px;top:522px;width:1px;height:16px;background:#C9C1A9"></div>
<div class="a" style="left:395px;top:522px;width:1px;height:16px;background:#C9C1A9"></div>
<div class="t" style="left:2.5px;top:524.7px;font-size:12.2px;color:#333;letter-spacing:0.12px">1 год работы</div>
<div class="t" style="left:333px;width:62px;text-align:center;top:524.7px;font-size:12.2px;color:#333">2</div>
<div class="t" style="left:395px;width:51px;text-align:center;top:524.7px;font-size:12.2px;color:#333">-</div>
<div class="t" style="left:5px;top:543.3px;font-size:24.5px;font-weight:bold;color:#6A5327;letter-spacing:0.2px">Причины отклонений</div>
<div class="t" style="left:368px;top:702.5px;font-size:16px;color:#333">33,33%</div>
<svg style="left:0;top:0" width="1" height="1"><path d="M425.5 722 C 430 712 436 702 448 691 L 483 691 L 483 722 Z" fill="#F8B900"/><path d="M744 720 H796 L797 722 H745Z" fill="#3BB2E8"/><path d="M419 719 L423 721.5" stroke="#777" stroke-width="0.8"/></svg>
<svg style="left:0;top:0" width="1" height="1"><path d="M1636 16 L1638.5 11 L1641 16Z" fill="#555"/><path d="M1636 706 L1638.5 711 L1641 706Z" fill="#555"/><path d="M1614 728 L1619 730.5 L1614 733Z" fill="#555"/><path d="M16 728 L11 730.5 L16 733Z" fill="#BBB"/></svg>
<div class="a" style="left:1633px;top:28px;width:10px;height:666px;border-radius:5px;background:#D4D4D4"></div>
<div class="a" style="left:1633px;top:172px;width:10px;height:337px;border-radius:5px;background:#999"></div>
<div class="a" style="left:28px;top:725px;width:1574px;height:10px;border-radius:5px;background:#D4D4D4"></div>
<div class="a" style="left:28px;top:725px;width:1049px;height:10px;border-radius:5px;background:#999"></div>
</div>
<!-- DIALOG -->
<div class="a" style="left:691px;top:308px;width:792px;height:646px;background:#fff;border:1px solid #A6A6A6;box-shadow:0 0 12px rgba(0,0,0,0.22)"></div>
<div class="t" style="left:707.5px;top:321.5px;font-size:23.8px;color:#000">Выбор поля</div>
<svg style="left:0;top:0" width="1" height="1">
 <g fill="#777"><circle cx="1381" cy="328.8" r="2"/><circle cx="1381" cy="334" r="2"/><circle cx="1381" cy="339.2" r="2"/></g>
 <rect x="1414.5" y="329.5" width="10" height="10" fill="none" stroke="#333" stroke-width="1.3"/>
 <path d="M1451 328 L1463 340 M1463 328 L1451 340" stroke="#333" stroke-width="1.3"/>
</svg>
<div class="a" style="left:707px;top:362px;width:750px;height:531px;border:1px solid #A8A8A8;background:#fff"></div>
<div class="a" style="left:708px;top:363px;width:748px;height:35px;background:#F2F2F2;border-bottom:1px solid #C8C8C8"></div>
<div class="t" style="left:718.0px;top:371.5px;font-size:16px;color:#666;transform-origin:0 0;transform:scaleX(0.973)">Доступные поля</div>
<div class="a" style="left:768px;top:398px;width:79px;height:33px;background:#FDE48E;border:3px solid #F8C71C"></div>
<div class="t" style="left:772.5px;top:407px;font-size:16px;color:#333;transform-origin:0 0;transform:scaleX(0.977)">Кандидат</div>
<div class="t" style="left:772.6px;top:440px;font-size:16px;color:#333;transform-origin:0 0;transform:scaleX(0.962)">Причина отклонения</div>
<div class="t" style="left:772.6px;top:473px;font-size:16px;color:#333;transform-origin:0 0;transform:scaleX(0.953)">Отклонение</div>
<div class="t" style="left:772.7px;top:506px;font-size:16px;color:#333;transform-origin:0 0;transform:scaleX(0.957)">Отклоненный кандидат</div>
<div class="t" style="left:772.7px;top:539px;font-size:16px;color:#333;transform-origin:0 0;transform:scaleX(0.946)">Поступление</div>
<div class="t" style="left:772.6px;top:572px;font-size:16px;color:#333;transform-origin:0 0;transform:scaleX(0.965)">Процент отклонение</div>
<div class="t" style="left:772.6px;top:605px;font-size:16px;color:#333;transform-origin:0 0;transform:scaleX(0.981)">Поля группировок</div>
<svg style="left:0;top:0" width="1" height="1"><defs><linearGradient id="dashg" x1="0" y1="0" x2="0" y2="1"><stop offset="0" stop-color="#9DB7CE"/><stop offset="1" stop-color="#6F90AE"/></linearGradient><linearGradient id="gfront" x1="0" y1="0" x2="0.6" y2="1"><stop offset="0" stop-color="#CFEF45"/><stop offset="1" stop-color="#2FC41E"/></linearGradient><linearGradient id="gside" x1="0" y1="0" x2="0" y2="1"><stop offset="0" stop-color="#72C81A"/><stop offset="1" stop-color="#2A8C0C"/></linearGradient><linearGradient id="greeng" x1="0" y1="0" x2="1" y2="0"><stop offset="0" stop-color="#8EDB3C"/><stop offset="0.6" stop-color="#4DBA17"/><stop offset="1" stop-color="#2F9A0A"/></linearGradient></defs><circle cx="726.5" cy="413.7" r="4.8" fill="#fff" stroke="#A8A8A8" stroke-width="1"/><path d="M724 413.7 H729 M726.5 411.2 V416.2" stroke="#777" stroke-width="1"/><rect x="744.8" y="414.5" width="12" height="3.6" rx="1.8" fill="url(#dashg)"/><rect x="744.8" y="447.5" width="12" height="3.6" rx="1.8" fill="url(#dashg)"/><circle cx="726.5" cy="479.7" r="4.8" fill="#fff" stroke="#A8A8A8" stroke-width="1"/><path d="M724 479.7 H729 M726.5 477.2 V482.2" stroke="#777" stroke-width="1"/><path d="M747.2 479.6 H750.8 L754.8 476.0 H751.2Z" fill="#6CD62C"/><rect x="747.2" y="479.6" width="3.6" height="10.2" fill="url(#gfront)"/><path d="M750.8 479.6 L754.8 476.0 V486.3 L750.8 489.8Z" fill="url(#gside)"/><circle cx="726.5" cy="512.7" r="4.8" fill="#fff" stroke="#A8A8A8" stroke-width="1"/><path d="M724 512.7 H729 M726.5 510.20000000000005 V515.2" stroke="#777" stroke-width="1"/><path d="M747.2 512.6 H750.8 L754.8 509.0 H751.2Z" fill="#6CD62C"/><rect x="747.2" y="512.6" width="3.6" height="10.2" fill="url(#gfront)"/><path d="M750.8 512.6 L754.8 509.0 V519.3 L750.8 522.8Z" fill="url(#gside)"/><circle cx="726.5" cy="545.7" r="4.8" fill="#fff" stroke="#A8A8A8" stroke-width="1"/><path d="M724 545.7 H729 M726.5 543.2 V548.2" stroke="#777" stroke-width="1"/><path d="M747.2 545.6 H750.8 L754.8 542.0 H751.2Z" fill="#6CD62C"/><rect x="747.2" y="545.6" width="3.6" height="10.2" fill="url(#gfront)"/><path d="M750.8 545.6 L754.8 542.0 V552.3 L750.8 555.8Z" fill="url(#gside)"/><circle cx="726.5" cy="578.7" r="4.8" fill="#fff" stroke="#A8A8A8" stroke-width="1"/><path d="M724 578.7 H729 M726.5 576.2 V581.2" stroke="#777" stroke-width="1"/><path d="M747.2 578.6 H750.8 L754.8 575.0 H751.2Z" fill="#6CD62C"/><rect x="747.2" y="578.6" width="3.6" height="10.2" fill="url(#gfront)"/><path d="M750.8 578.6 L754.8 575.0 V585.3 L750.8 588.8Z" fill="url(#gside)"/><circle cx="726.5" cy="611.7" r="4.8" fill="#fff" stroke="#A8A8A8" stroke-width="1"/><path d="M724 611.7 H729 M726.5 609.2 V614.2" stroke="#777" stroke-width="1"/><path d="M745.7 610.4 H749.6 L750.8 611.7 H755.3 V619.2 H745.7Z" fill="#FFDF62" stroke="#C98F2C" stroke-width="0.9" stroke-linejoin="round"/><path d="M745.7 614.5 H755.3" stroke="#C98F2C" stroke-width="1"/></svg>
<div class="ybtn" style="left:1200px;top:904px;width:107px;height:33px"></div>
<div class="t" style="left:1216.5px;top:913px;font-size:16px;font-weight:bold;color:#30374A;letter-spacing:0.3px">Выбрать</div>
<div class="btn" style="left:1318px;top:904px;width:90px;height:33px"></div>
<div class="t" style="left:1334.8px;top:912.3px;font-size:16px;color:#444;transform-origin:0 0;transform:scaleX(0.968)">Отмена</div>
<div class="btn" style="left:1419px;top:904px;width:38px;height:33px"></div>
<div class="t" style="left:1433px;top:913px;font-size:16.5px;color:#111">?</div>

<!-- ANNOTATIONS -->
<div class="a" style="left:705px;top:390px;width:161px;height:52px;border:5px solid #EC1B24"></div>
<div class="a" style="left:573px;top:685px;width:76px;height:29px;border:5px solid #EC1B24"></div>
<svg style="left:0;top:0" width="1" height="1">
 <g fill="none" stroke="#EC1B24" stroke-width="4.6" stroke-linecap="round" stroke-linejoin="round">
  <path d="M648 666 C 664 590 684 510 704 452"/>
  <path d="M677.5 483.5 L704.5 450.5 L703.3 494.5"/>
 </g>
</svg>

</body></html>
